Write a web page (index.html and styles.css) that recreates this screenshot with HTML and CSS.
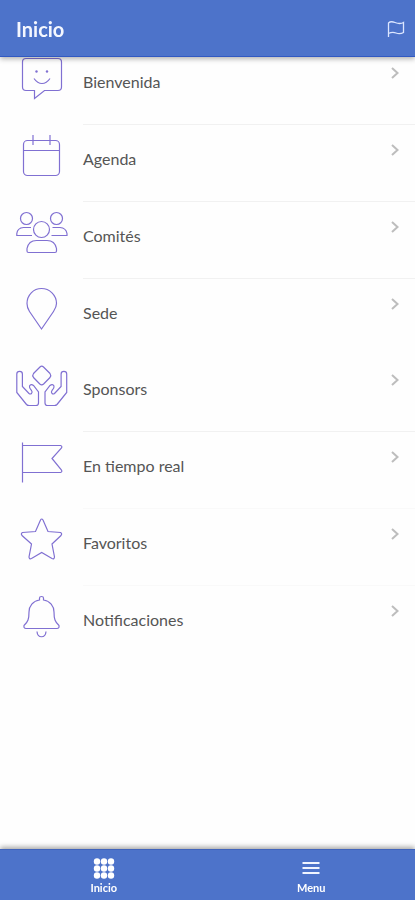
FILE: index.html
```html
<!DOCTYPE html>
<html lang="es">
<head>
<meta charset="utf-8">
<meta name="viewport" content="width=device-width, initial-scale=1">
<title>Inicio</title>
<link rel="stylesheet" href="styles.css">
</head>
<body>

<!-- shared chevron -->
<svg class="defs" width="0" height="0" aria-hidden="true">
    <symbol id="chevron" viewBox="0 0 10 14">
        <path d="M2 2l5.5 5L2 12"/>
    </symbol>
</svg>

<header class="header">
    <h1 class="title">Inicio</h1>
    <button class="flag-button" type="button" aria-label="Marcar">
        <svg width="18" height="18" viewBox="0 0 18 18">
            <path d="M1.500 17V3C2.500 2 5.500 1.500 8 2.500S14 4 16.500 2.500V12.500C14 14 11.500 14 9 13S3.500 12.500 1.500 13.500"/>
        </svg>
    </button>
</header>

<main class="content">
    <ul class="menu">
        <li>
            <a class="item" href="#bienvenida">
                <svg class="icon" viewBox="0 0 52 44">
                    <path d="M10 2.500H42Q45.500 2.500 45.500 6V31Q45.500 34.500 42 34.500H28.500L18.500 42.500V34.500H10Q6.500 34.500 6.500 31V6Q6.500 2.500 10 2.500Z"/>
                    <path d="M18 22.500Q21.500 27.500 26 27.500T34 22.500"/>
                    <circle class="dot" cx="20.500" cy="15.500" r="1.200"/>
                    <circle class="dot" cx="31" cy="15.500" r="1.200"/>
                </svg>
                <span class="label">Bienvenida</span>
                <svg class="chevron"><use href="#chevron"/></svg>
            </a>
        </li>
        <li>
            <a class="item" href="#agenda">
                <svg class="icon" viewBox="0 0 52 44">
                    <rect x="7.500" y="7.500" width="36" height="35" rx="4"/>
                    <path d="M7.500 17.500H43.500M17 2V12M34 2V12"/>
                </svg>
                <span class="label">Agenda</span>
                <svg class="chevron"><use href="#chevron"/></svg>
            </a>
        </li>
        <li>
            <a class="item" href="#comites">
                <svg class="icon" viewBox="0 0 52 44">
                    <circle cx="10.500" cy="8.500" r="6"/>
                    <circle cx="40.500" cy="8.500" r="6"/>
                    <circle cx="25.500" cy="19.500" r="8"/>
                    <path d="M16 25.500H.800V23.500Q1.500 18 7.500 17.500H15"/>
                    <path d="M35.500 25.500H51V23.500Q50 18 44 17.500H36.500"/>
                    <path d="M12.500 42.500Q11 42.500 11 41V38.500C12 33.500 15.500 30.500 20.500 30.500H31C36 30.500 39.500 33.500 40.500 38.500V41Q40.500 42.500 39 42.500Z"/>
                </svg>
                <span class="label">Comités</span>
                <svg class="chevron"><use href="#chevron"/></svg>
            </a>
        </li>
        <li>
            <a class="item item-plain" href="#sede">
                <svg class="icon" viewBox="0 0 52 44">
                    <path d="M25.500 42L13.500 24.500C11.500 21.500 11 19 11 16.500C11 8 17.500 1.500 25.500 1.500S40.500 8 40.500 16.500C40.500 19 39.500 21.500 37.500 24.500Z"/>
                </svg>
                <span class="label">Sede</span>
                <svg class="chevron"><use href="#chevron"/></svg>
            </a>
        </li>
        <li>
            <a class="item" href="#sponsors">
                <svg class="icon" viewBox="0 0 52 44">
                    <path d="M24 4L17.500 10.500Q16 12.500 17.500 14.500L23.800 21Q25.700 22.800 27.600 21L34 14.500Q35.500 12.500 34 10.500L27.500 4Q25.700 2.300 24 4Z"/>
                    <path d="M.800 11Q.800 8.300 3.600 8.300T6.400 11V23.500L13 30.500Q14.300 31.500 15.500 30.500Q16.700 29 15.500 27.500Q13 25 13.500 23Q15 20.500 17.500 22.500L22.500 29V40Q22.500 42.500 20 42.500H13Q11.500 42.500 10.500 41.500L.800 29.500Z"/>
                    <path d="M50.700 11Q50.700 8.300 47.900 8.300T45.100 11V23.500L38.500 30.500Q37.200 31.500 36 30.500Q34.800 29 36 27.500Q38.500 25 38 23Q36.500 20.500 34 22.500L29 29V40Q29 42.500 31.500 42.500H38.500Q40 42.500 41 41.500L50.700 29.500Z"/>
                </svg>
                <span class="label">Sponsors</span>
                <svg class="chevron"><use href="#chevron"/></svg>
            </a>
        </li>
        <li>
            <a class="item item-faint" href="#en-tiempo-real">
                <svg class="icon" viewBox="0 0 52 44">
                    <path d="M6.500 2.500V42.500"/>
                    <path d="M6.500 5.500H44.500Q46.500 6 45.500 8L36 18.500L45.500 30Q46.500 32 44.500 32.500H6.500"/>
                </svg>
                <span class="label">En tiempo real</span>
                <svg class="chevron"><use href="#chevron"/></svg>
            </a>
        </li>
        <li>
            <a class="item item-faint" href="#favoritos">
                <svg class="icon" viewBox="0 0 52 44">
                    <path d="M24.500 3Q25.700 1 27 3L32 14.500L44.500 15.500Q46.500 16.500 45 18.500L36 27L38.500 40Q38.300 42.500 36 41.500L25.700 35.500L15.500 41.500Q13.200 42.500 13 40L15.500 27L6 18.500Q4.500 16.500 6.500 15.500L19.500 14.500Z"/>
                </svg>
                <span class="label">Favoritos</span>
                <svg class="chevron"><use href="#chevron"/></svg>
            </a>
        </li>
        <li>
            <a class="item item-plain" href="#notificaciones">
                <svg class="icon" viewBox="0 0 52 44">
                    <path d="M23.500 6V4Q23.500 2.500 25.500 2.500T27.500 4V6C34 7 38 12 38 18C38 25 39 28 43 31.500Q43.500 34.500 41 34.500H10Q7.500 34.500 8 31.500C12 28 13 25 13 18C13 12 17 7 23.500 6Z"/>
                    <path d="M21 37.500C21.500 44.500 29.500 44.500 30 37.500"/>
                </svg>
                <span class="label">Notificaciones</span>
                <svg class="chevron"><use href="#chevron"/></svg>
            </a>
        </li>
    </ul>
</main>

<nav class="tabs">
    <a class="tab" href="#inicio">
        <svg class="tab-icon tab-dots" viewBox="0 0 24 24">
            <circle cx="5" cy="4.500" r="3.200"/><circle cx="12" cy="4.500" r="3.200"/><circle cx="19" cy="4.500" r="3.200"/>
            <circle cx="5" cy="11.500" r="3.200"/><circle cx="12" cy="11.500" r="3.200"/><circle cx="19" cy="11.500" r="3.200"/>
            <circle cx="5" cy="18.500" r="3.200"/><circle cx="12" cy="18.500" r="3.200"/><circle cx="19" cy="18.500" r="3.200"/>
        </svg>
        <span>Inicio</span>
    </a>
    <a class="tab" href="#menu">
        <svg class="tab-icon tab-lines" viewBox="0 0 24 24">
            <path d="M3.500 6H20.500M3.500 11H20.500M3.500 16H20.500"/>
        </svg>
        <span>Menu</span>
    </a>
</nav>

</body>
</html>
```
FILE: styles.css
```css
* {
    box-sizing: border-box;
}

body {
    background-color: #FEFEFE;
    color: #555555;
    font-family: Lato, "Open Sans", sans-serif;
    margin: 0;
}

svg {
    fill: none;
}

.defs {
    position: absolute;
}

.header {
    position: fixed;
    top: 0;
    left: 0;
    right: 0;
    z-index: 1;
    display: flex;
    align-items: center;
    justify-content: space-between;
    height: 57px;
    padding: 1px 10px 0 16px;
    background: #4D73CA;
    border-bottom: 1px solid #3159C2;
    box-shadow: 0 2px 5px rgba(0, 0, 0, 0.3);
}

.title {
    margin: 0;
    color: #F4F7FF;
    font-size: 20px;
    line-height: 24px;
    font-weight: 700;
}

.flag-button {
    display: flex;
    padding: 0;
    border: 0;
    background: none;
    stroke: #DCE6FF;
    stroke-width: 1.3;
}

/* the list is scrolled slightly under the header */
.content {
    padding: 48px 0 50px;
}

.menu {
    list-style: none;
    margin: 0;
    padding: 0;
}

.item {
    display: grid;
    grid-template-columns: 52px 1fr 10px;
    column-gap: 15px;
    align-items: start;
    padding: 8px 15px 0 16px;
    color: inherit;
    text-decoration: none;
}

.item::after {
    content: "";
    grid-column: 2 / -1;
    height: 1px;
    margin: 24px -15px 0 0;
    background: #F1F1F1;
}

.item-faint::after {
    background: #F9F9F9;
}

.item-plain::after {
    height: 0;
}

.icon {
    width: 52px;
    height: 44px;
    stroke: #8070D2;
    stroke-width: 1.2;
}

.dot {
    fill: #8070D2;
    stroke: none;
}

.label {
    padding-top: 16px;
    font-size: 16px;
    line-height: 20px;
}

.chevron {
    width: 10px;
    height: 14px;
    margin-top: 10px;
    stroke: #BDBDBD;
    stroke-width: 2;
}

.tabs {
    position: fixed;
    left: 0;
    right: 0;
    bottom: 0;
    display: flex;
    height: 51px;
    background: #4D73CA;
    border-top: 1px solid #4164BB;
    box-shadow: 0 -2px 5px rgba(0, 0, 0, 0.35);
}

.tab {
    flex: 1;
    display: flex;
    flex-direction: column;
    align-items: center;
    padding-top: 7px;
    color: #FFFFFF;
    font-size: 11px;
    line-height: 14px;
    font-weight: 700;
    text-decoration: none;
}

.tab-icon {
    width: 24px;
    height: 24px;
}

.tab-dots {
    fill: #FFFFFF;
}

.tab-lines {
    stroke: #F0F4FF;
    stroke-width: 2;
}
```
